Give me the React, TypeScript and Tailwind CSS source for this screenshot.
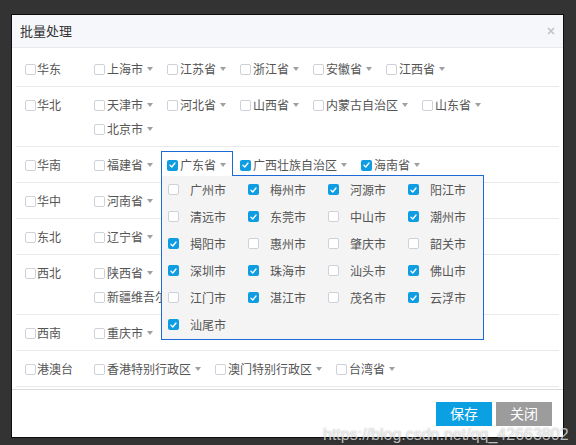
import React from 'react';

type Region = { name: string; provinces: { name: string; checked?: boolean; open?: boolean }[] };

const regions: Region[] = [
  { name: '华东', provinces: [{ name: '上海市' }, { name: '江苏省' }, { name: '浙江省' }, { name: '安徽省' }, { name: '江西省' }] },
  { name: '华北', provinces: [{ name: '天津市' }, { name: '河北省' }, { name: '山西省' }, { name: '内蒙古自治区' }, { name: '山东省' }, { name: '北京市' }] },
  {
    name: '华南',
    provinces: [
      { name: '福建省' },
      { name: '广东省', checked: true, open: true },
      { name: '广西壮族自治区', checked: true },
      { name: '海南省', checked: true },
    ],
  },
  { name: '华中', provinces: [{ name: '河南省' }, { name: '湖北省' }, { name: '湖南省' }] },
  { name: '东北', provinces: [{ name: '辽宁省' }, { name: '吉林省' }, { name: '黑龙江省' }] },
  { name: '西北', provinces: [{ name: '陕西省' }, { name: '甘肃省' }, { name: '青海省' }, { name: '宁夏回族自治区' }, { name: '新疆维吾尔自治区' }] },
  { name: '西南', provinces: [{ name: '重庆市' }, { name: '四川省' }, { name: '贵州省' }, { name: '云南省' }, { name: '西藏自治区' }] },
  { name: '港澳台', provinces: [{ name: '香港特别行政区' }, { name: '澳门特别行政区' }, { name: '台湾省' }] },
];

const cities: [string, boolean][] = [
  ['广州市', false], ['梅州市', true], ['河源市', true], ['阳江市', true],
  ['清远市', false], ['东莞市', true], ['中山市', false], ['潮州市', true],
  ['揭阳市', true], ['惠州市', false], ['肇庆市', false], ['韶关市', false],
  ['深圳市', true], ['珠海市', true], ['汕头市', false], ['佛山市', true],
  ['江门市', false], ['湛江市', true], ['茂名市', false], ['云浮市', true],
  ['汕尾市', true],
];

const Check: React.FC<{ checked?: boolean }> = ({ checked }) =>
  checked ? (
    <span className="flex h-[11px] w-[11px] shrink-0 items-center justify-center rounded-[2px] bg-[#0e9de3]">
      <svg width="7" height="6" viewBox="0 0 7 6" fill="none">
        <path d="M1 3.2 2.8 5 6 1" stroke="white" strokeWidth="1.3" strokeLinecap="round" strokeLinejoin="round" />
      </svg>
    </span>
  ) : (
    <span className="h-[11px] w-[11px] shrink-0 rounded-[2px] border border-[#cdd1d9] bg-white" />
  );

const Arrow = () => (
  <span className="ml-[4px] inline-block h-0 w-0 border-x-[3px] border-t-[4px] border-x-transparent border-t-[#a0a0a0]" />
);

const CityPanel = () => (
  <div className="absolute left-[-6px] top-[22px] z-0 h-[165px] w-[323px] border border-[#1d6ad6] bg-[#f4f4f4] pl-[6px]">
    <div className="grid grid-cols-[80px_80px_80px_75px]">
      {cities.map(([c, on]) => (
        <div key={c} className="flex h-[27px] items-center">
          <Check checked={on} />
          <span className="ml-[11px] text-[#555]">{c}</span>
        </div>
      ))}
    </div>
  </div>
);

const App: React.FC = () => {
  return (
    <div
      className="relative h-[445px] w-[576px] overflow-hidden bg-[#333333] pl-[11px] pt-[14px] text-[12px]"
      style={{ fontFamily: '"Noto Sans CJK SC", "Noto Sans", sans-serif' }}
    >
      <div className="relative flex h-[424px] w-[553px] flex-col border border-[#0d0d0d] bg-white">
        {/* Header */}
        <div className="flex h-[33px] shrink-0 items-center justify-between border-b border-[#e8eaee] bg-[#f6f7fa] pl-[8px] pr-[8px]">
          <span className="text-[13px] text-[#333]">批量处理</span>
          <svg width="8" height="8" viewBox="0 0 8 8">
            <path d="M1 1 7 7M7 1 1 7" stroke="#c2c2c2" strokeWidth="1.6" />
          </svg>
        </div>

        {/* Body */}
        <div className="flex-1 px-[4px] pt-[3px]">
          {regions.map((r) => (
            <div key={r.name} className="flex border-b border-[#e9e9e9] pb-[5px] pl-[9px] pt-[6px] leading-[24px]">
              <div className="flex h-[24px] w-[69px] shrink-0 items-center">
                <Check />
                <span className="ml-[1px] text-[#555]">{r.name}</span>
              </div>
              <div className="flex flex-1 flex-wrap">
                {r.provinces.map((p) => (
                  <div key={p.name} className={`relative mr-[14px] flex h-[24px] items-center ${p.open ? 'z-30' : ''}`}>
                    {p.open && (
                      <>
                        <div className="absolute left-[-6px] right-[-7px] top-[-2px] z-10 h-[25px] border border-b-0 border-[#1d6ad6] bg-white" />
                        <CityPanel />
                      </>
                    )}
                    <div className="relative z-20 flex items-center">
                      <Check checked={p.checked} />
                      <span className="ml-[2px] text-[#555]">{p.name}</span>
                      <Arrow />
                    </div>
                  </div>
                ))}
              </div>
            </div>
          ))}
        </div>

        {/* Footer */}
        <div className="flex h-[48px] shrink-0 items-center justify-end gap-[4px] border-t border-[#dcdcdc] pr-[11px]">
          <button className="h-[24px] w-[56px] bg-[#0aa0e1] text-[14px] text-white">保存</button>
          <button className="h-[24px] w-[56px] bg-[#9c9c9c] text-[14px] text-white">关闭</button>
        </div>

        {/* Watermark */}
        <div
          className="pointer-events-none absolute left-[311px] top-[408px] z-40 text-[16px] leading-[24px] text-white/70 [text-shadow:0_0_1.5px_rgba(0,0,0,0.35)]"
          style={{ fontFamily: '"Liberation Sans", Arial, sans-serif' }}
        >
          https://blog.csdn.net/qq_42663802
        </div>
      </div>
    </div>
  );
};

export default App;
